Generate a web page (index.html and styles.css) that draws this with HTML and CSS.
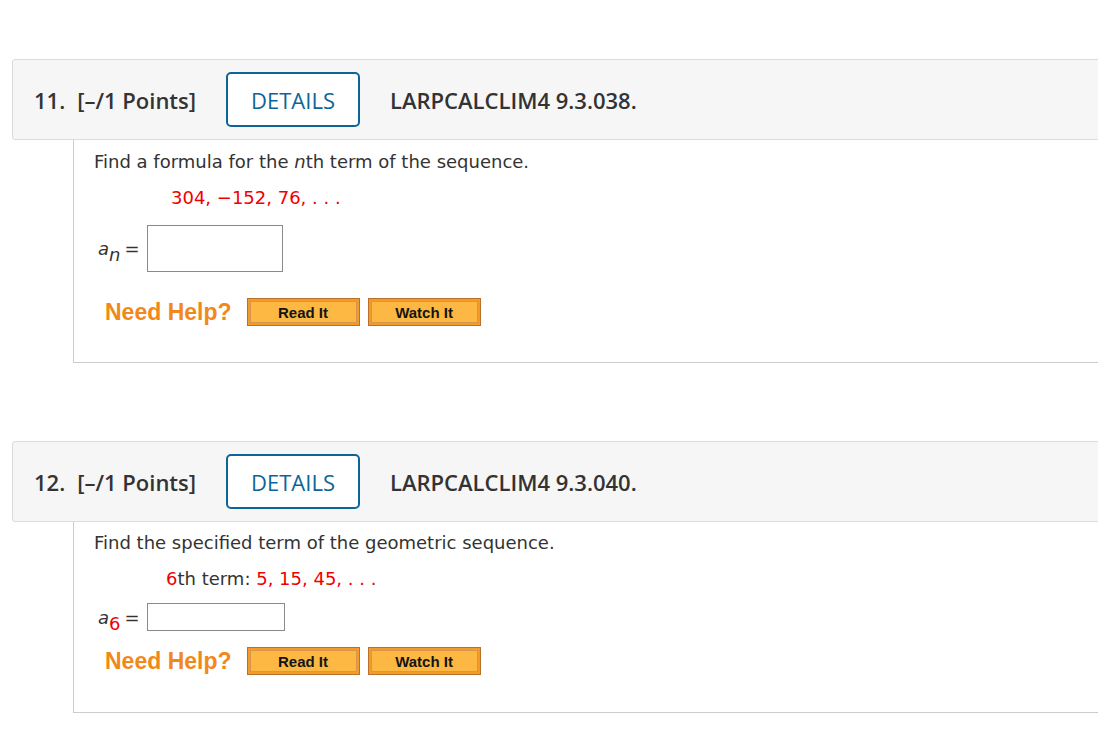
FILE: index.html
```html
<!DOCTYPE html>
<html lang="en">
<head>
<meta charset="utf-8">
<title>Questions</title>
<link rel="stylesheet" href="styles.css">
</head>
<body>
<div class="page">
  <div class="question q1">
    <div class="qhead">
      <span class="qnum">11.</span>
      <span class="qpts">[–/1 Points]</span>
      <button class="details">DETAILS</button>
      <span class="qref">LARPCALCLIM4 9.3.038.</span>
    </div>
    <div class="qbody">
      <p class="prompt">Find a formula for the <i>n</i>th term of the sequence.</p>
      <p class="seq"><span class="red">304, −152, 76, . . .</span></p>
      <div class="answer">
        <span class="var"><i>a</i><sub><i>n</i></sub></span>
        <span class="eq">=</span>
        <span class="box"></span>
      </div>
      <div class="help">
        <span class="needhelp">Need Help?</span>
        <button class="hbtn">Read It</button>
        <button class="hbtn">Watch It</button>
      </div>
    </div>
  </div>

  <div class="question q2">
    <div class="qhead">
      <span class="qnum">12.</span>
      <span class="qpts">[–/1 Points]</span>
      <button class="details">DETAILS</button>
      <span class="qref">LARPCALCLIM4 9.3.040.</span>
    </div>
    <div class="qbody">
      <p class="prompt">Find the specified term of the geometric sequence.</p>
      <p class="seq"><span class="red">6</span>th term: <span class="red">5, 15, 45, . . .</span></p>
      <div class="answer">
        <span class="var"><i>a</i><sub class="red">6</sub></span>
        <span class="eq">=</span>
        <span class="box"></span>
      </div>
      <div class="help">
        <span class="needhelp">Need Help?</span>
        <button class="hbtn">Read It</button>
        <button class="hbtn">Watch It</button>
      </div>
    </div>
  </div>
</div>
</body>
</html>
```

FILE: styles.css
```css
html, body {
  margin: 0;
  padding: 0;
  background: #ffffff;
  overflow: hidden;
}

.page {
  padding: 59px 0 0 12px;
}

.question {
  margin-right: -20px;
}

.q2 {
  margin-top: 78px;
}

.qhead {
  display: flex;
  align-items: center;
  height: 79px;
  background: #f6f6f6;
  border: 1px solid #dcdcdc;
  border-radius: 3px;
  padding-left: 21px;
  font-family: "Open Sans", "Liberation Sans", sans-serif;
  font-weight: 600;
  font-size: 22px;
  color: #333333;
}

.qpts {
  margin-left: 12px;
}

.details {
  margin-left: 30px;
  width: 134px;
  height: 55px;
  box-sizing: border-box;
  border: 2px solid #0d6499;
  border-radius: 5px;
  background: #ffffff;
  color: #0d6499;
  font-family: "Open Sans", "Liberation Sans", sans-serif;
  font-size: 22px;
  font-weight: 400;
  padding: 0;
}

.qref {
  margin-left: 30px;
}

.qbody {
  margin-left: 61px;
  border-left: 1px solid #cccccc;
  border-bottom: 1px solid #cccccc;
  padding: 11px 0 36px 20px;
  font-family: "DejaVu Sans", Verdana, sans-serif;
  font-size: 18px;
  color: #333333;
}

.q2 .qbody {
  padding-top: 10px;
  padding-bottom: 37px;
}

.prompt {
  margin: 0;
  line-height: 22px;
}

.seq {
  margin: 14px 0 0 0;
  line-height: 22px;
  padding-left: 77px;
}

.q2 .seq {
  padding-left: 72px;
}

.red {
  color: #f00000;
}

.answer {
  display: flex;
  align-items: center;
  margin-top: 16px;
  padding-left: 4px;
}

.q2 .answer {
  margin-top: 13px;
}

.var {
  font-size: 18px;
  color: #333333;
}

.var sub {
  font-size: 18px;
  vertical-align: -6px;
  line-height: 0;
}

.eq {
  margin-left: 4px;
}

.box {
  margin-left: 7px;
  width: 136px;
  height: 47px;
  box-sizing: border-box;
  border: 1px solid #8a8a8a;
  background: #ffffff;
}

.q2 .box {
  width: 138px;
  height: 28px;
}

.help {
  display: flex;
  align-items: center;
  margin-top: 26px;
  padding-left: 11px;
  height: 28px;
}

.q2 .help {
  margin-top: 16px;
}

.needhelp {
  font-family: "Liberation Sans", Arial, sans-serif;
  font-weight: 700;
  font-size: 23px;
  color: #f0891a;
  margin-right: 15px;
}

.hbtn {
  width: 113px;
  height: 28px;
  box-sizing: border-box;
  margin-right: 8px;
  padding: 0;
  border: 1px solid #b5732c;
  background: #fcb842;
  box-shadow: inset 0 0 0 2px #f59a26, inset 0 0 0 3px #d5974a;
  font-family: "Liberation Sans", Arial, sans-serif;
  font-weight: 700;
  font-size: 15px;
  color: #141414;
}
```
